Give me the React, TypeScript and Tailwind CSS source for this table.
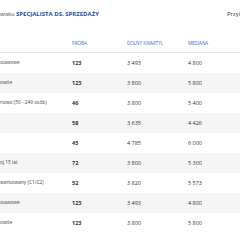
import React from "react";

const rows = [
  { label: "stawowe", n: "123", q: "3 493", m: "4 800" },
  { label: "owite", n: "123", q: "3 800", m: "5 800" },
  { label: "rstwo (50 - 249 osób)", n: "46", q: "3 800", m: "5 400" },
  { label: "", n: "58", q: "3 635", m: "4 426" },
  { label: "", n: "45", q: "4 785", m: "6 000" },
  { label: "oj 15 lat", n: "72", q: "3 800", m: "5 300" },
  { label: "wansowany (C1/C2)", n: "52", q: "3 820", m: "5 573" },
  { label: "stawowe", n: "123", q: "3 493", m: "4 800" },
  { label: "owite", n: "123", q: "3 800", m: "5 800" },
];

export default function App() {
  return (
    <div
      className="w-[240px] h-[240px] overflow-hidden bg-white text-[#333]"
      style={{ fontFamily: '"Open Sans", "Noto Sans", sans-serif' }}
    >
      <div className="flex items-center h-[28px] pt-[1px]">
        <div className="text-[5.5px] text-[#444] whitespace-nowrap">
          wisku{" "}
          <span className="font-bold text-[6px] text-[#1d4f9e]">SPECJALISTA DS. SPRZEDAŻY</span>
        </div>
        <div className="ml-auto text-[6px] text-[#333] whitespace-nowrap pl-[2px] w-[15px] overflow-hidden">
          Przykład
        </div>
      </div>
      <div className="grid grid-cols-[72px_55px_61px_52px] h-[25px] items-center border-b border-[#e6e6e6] text-[4.5px] text-[#3b6ec2] uppercase">
        <div />
        <div className="pt-[6px]">Próba</div>
        <div className="pt-[6px]">Dolny kwartyl</div>
        <div className="pt-[6px]">Mediana</div>
      </div>
      {rows.map((r, i) => (
        <div
          key={i}
          className={`grid grid-cols-[72px_55px_61px_52px] h-[20px] items-center text-[5.5px] ${
            i % 2 === 1 ? "bg-[#f5f5f5]" : "bg-white"
          }`}
        >
          <div className="whitespace-nowrap text-[#444] text-[4.8px]">{r.label}</div>
          <div className="font-bold text-[#333]">{r.n}</div>
          <div className="text-[#333]">{r.q}</div>
          <div className="text-[#333]">{r.m}</div>
        </div>
      ))}
    </div>
  );
}
